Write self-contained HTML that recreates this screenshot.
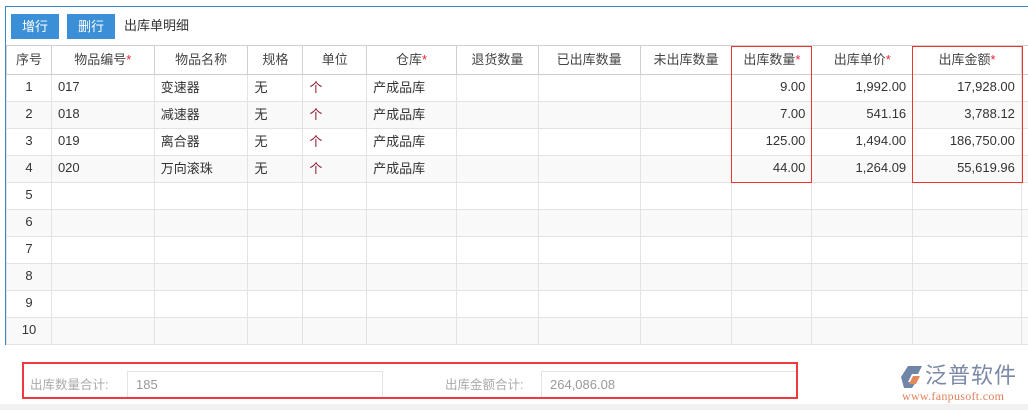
<!DOCTYPE html>
<html><head><meta charset="utf-8"><style>
*{margin:0;padding:0;box-sizing:border-box}
body{width:1028px;height:410px;background:#fff;font-family:"Liberation Sans","Noto Sans CJK SC",sans-serif;font-size:13px;color:#333;position:relative;overflow:hidden}
.panel{position:absolute;left:5px;top:6px;width:1030px;height:339px;border:1px solid #3a87c8;border-right:none}
.btn{position:absolute;top:7px;height:25px;width:48px;background:#3a8fd6;color:#fff;font-size:13px;line-height:25px;text-align:center}
table{position:absolute;left:0;top:38px;border-collapse:collapse;table-layout:fixed}
td,th{border:1px solid #e3e3e3;height:27px;padding:0 6px 3px;font-weight:normal;white-space:nowrap;overflow:hidden}
th{border:1px solid #cfcfcf;height:29px;text-align:center;color:#444}
tr:nth-child(odd) td{background:#f9f9f9}
.r{text-align:right}.c{text-align:center}
.s{color:#e23}
.u{color:#8a1a2a}
.box{position:absolute;border:1px solid #e33}
</style></head><body>
<div class="panel">
<div class="btn" style="left:5px">增行</div>
<div class="btn" style="left:61px">删行</div>
<div style="position:absolute;left:118px;top:6px;line-height:25px">出库单明细</div>
<table>
<colgroup><col style="width:45px"><col style="width:103px"><col style="width:94px"><col style="width:55px"><col style="width:64px"><col style="width:90px"><col style="width:82px"><col style="width:102px"><col style="width:92px"><col style="width:80px"><col style="width:101px"><col style="width:109px"><col style="width:10px"></colgroup>
<tr><th>序号</th><th>物品编号<span class="s">*</span></th><th>物品名称</th><th>规格</th><th>单位</th><th>仓库<span class="s">*</span></th><th>退货数量</th><th>已出库数量</th><th>未出库数量</th><th>出库数量<span class="s">*</span></th><th>出库单价<span class="s">*</span></th><th>出库金额<span class="s">*</span></th><th></th></tr>
<tr><td class="c">1</td><td>017</td><td>变速器</td><td>无</td><td class="u">个</td><td>产成品库</td><td></td><td></td><td></td><td class="r">9.00</td><td class="r">1,992.00</td><td class="r">17,928.00</td><td></td></tr>
<tr><td class="c">2</td><td>018</td><td>减速器</td><td>无</td><td class="u">个</td><td>产成品库</td><td></td><td></td><td></td><td class="r">7.00</td><td class="r">541.16</td><td class="r">3,788.12</td><td></td></tr>
<tr><td class="c">3</td><td>019</td><td>离合器</td><td>无</td><td class="u">个</td><td>产成品库</td><td></td><td></td><td></td><td class="r">125.00</td><td class="r">1,494.00</td><td class="r">186,750.00</td><td></td></tr>
<tr><td class="c">4</td><td>020</td><td>万向滚珠</td><td>无</td><td class="u">个</td><td>产成品库</td><td></td><td></td><td></td><td class="r">44.00</td><td class="r">1,264.09</td><td class="r">55,619.96</td><td></td></tr>
<tr><td class="c">5</td><td></td><td></td><td></td><td></td><td></td><td></td><td></td><td></td><td></td><td></td><td></td><td></td></tr>
<tr><td class="c">6</td><td></td><td></td><td></td><td></td><td></td><td></td><td></td><td></td><td></td><td></td><td></td><td></td></tr>
<tr><td class="c">7</td><td></td><td></td><td></td><td></td><td></td><td></td><td></td><td></td><td></td><td></td><td></td><td></td></tr>
<tr><td class="c">8</td><td></td><td></td><td></td><td></td><td></td><td></td><td></td><td></td><td></td><td></td><td></td><td></td></tr>
<tr><td class="c">9</td><td></td><td></td><td></td><td></td><td></td><td></td><td></td><td></td><td></td><td></td><td></td><td></td></tr>
<tr><td class="c">10</td><td></td><td></td><td></td><td></td><td></td><td></td><td></td><td></td><td></td><td></td><td></td><td></td></tr>
</table>
</div>
<div class="box" style="left:731px;top:46px;width:81px;height:137px"></div>
<div class="box" style="left:912px;top:46px;width:111px;height:137px"></div>
<div style="position:absolute;left:0;top:404px;width:1028px;height:6px;background:#f1f1f1"></div>
<div style="position:absolute;left:30px;top:374px;color:#aaa;font-size:12.5px">出库数量合计:</div>
<div style="position:absolute;left:127px;top:371px;width:256px;height:28px;border:1px solid #e3e3e3;color:#999;padding-left:8px;line-height:26px;font-size:13px">185</div>
<div style="position:absolute;left:445px;top:374px;color:#aaa;font-size:12.5px">出库金额合计:</div>
<div style="position:absolute;left:541px;top:371px;width:256px;height:28px;border:1px solid #e3e3e3;border-right:none;color:#999;padding-left:8px;line-height:26px;font-size:13px">264,086.08</div>
<div style="position:absolute;left:22px;top:362px;width:776px;height:37px;border:2px solid #f0383d"></div>
<svg style="position:absolute;left:900px;top:364px" width="26" height="26" viewBox="0 0 26 26"><path d="M8 2H22L18 10H12L8 18H16L12 24H4L1 13Z" fill="#6f86a8"/><path d="M13 12H20L16 20H9Z" fill="#e08a5a"/></svg>
<div style="position:absolute;left:925px;top:362px;font-size:22px;color:#7a8aa6;letter-spacing:1px;line-height:28px">泛普软件</div>
<div style="position:absolute;left:902px;top:389px;font-family:'Liberation Serif',serif;font-size:12px;color:#e0805a;letter-spacing:0.3px">www.fanpusoft.com</div>
</body></html>
